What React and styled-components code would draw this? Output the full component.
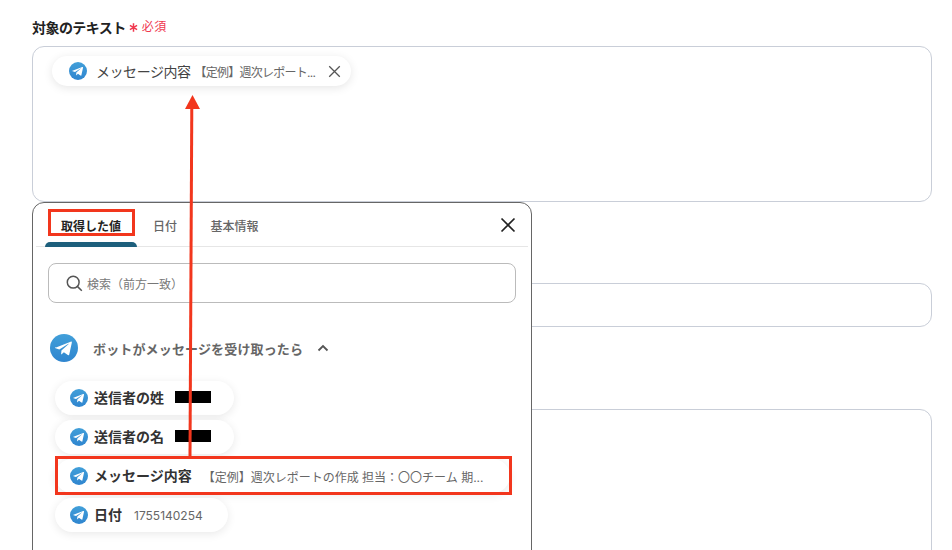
import React from "react";
import styled, { createGlobalStyle } from "styled-components";

const GlobalStyle = createGlobalStyle`
  html, body {
    margin: 0;
    padding: 0;
    background: #fff;
    font-family: Inter, "Noto Sans CJK JP", sans-serif;
  }
`;

const Page = styled.div`
  position: relative;
  width: 952px;
  height: 550px;
  overflow: hidden;
  background: #fff;
`;

const Form = styled.div`
  display: flex;
  flex-direction: column;
  padding: 17px 20px 0 32px;
`;

const LabelRow = styled.div`
  display: flex;
  align-items: center;
  height: 20px;
  margin-bottom: 9px;
`;

const LabelText = styled.span`
  font-size: 14px;
  font-weight: 700;
  letter-spacing: -0.55px;
  color: #222;
`;

const Star = styled.span`
  display: flex;
  margin: 1px 4px 0 3px;
  color: #f0384f;
`;

const Required = styled.span`
  margin-top: -3px;
  font-size: 12px;
  letter-spacing: 0.4px;
  color: #f0384f;
`;

const FieldBox = styled.div`
  box-sizing: border-box;
  height: ${p => p.$height}px;
  margin-bottom: ${p => p.$gap}px;
  padding: 9px 19px;
  border: 1px solid #c9ced8;
  border-radius: 12px;
  background: #fff;
`;

const Chip = styled.div`
  display: inline-flex;
  align-items: center;
  box-sizing: border-box;
  width: 299px;
  height: 30px;
  padding: 0 10px 0 17px;
  border-radius: 15px;
  background: #fff;
  box-shadow: 0 2px 10px rgba(0, 0, 0, 0.1);
`;

const ChipName = styled.span`
  margin-left: 9px;
  font-size: 14px;
  letter-spacing: -0.45px;
  color: #444;
  white-space: nowrap;
`;

const ChipValue = styled.span`
  flex: 1;
  margin-left: 4px;
  font-size: 12px;
  letter-spacing: -0.75px;
  color: #666;
  white-space: nowrap;
`;

const Popup = styled.div`
  position: absolute;
  left: 32px;
  top: 202px;
  box-sizing: border-box;
  width: 500px;
  height: 380px;
  border: 1px solid #666;
  border-radius: 12px;
  background: #fff;
`;

const TabBar = styled.div`
  position: relative;
  display: flex;
  align-items: stretch;
  height: 43px;
  margin: 0 3px;
  padding-left: 9px;
  border-bottom: 1px solid #e6e6e6;
`;

const Tab = styled.div`
  position: relative;
  display: flex;
  align-items: center;
  justify-content: center;
  box-sizing: border-box;
  width: ${p => p.$width}px;
  padding-top: 1px;
  font-size: 12px;
  font-weight: ${p => (p.$active ? 700 : 500)};
  color: ${p => (p.$active ? "#222" : "#666")};

  &::after {
    content: "";
    display: ${p => (p.$active ? "block" : "none")};
    position: absolute;
    left: 0;
    right: 0;
    bottom: -1px;
    height: 5px;
    border-radius: 5px 5px 0 0;
    background: #1d5f7c;
  }
`;

const CloseButton = styled.div`
  position: absolute;
  right: 12px;
  top: 14px;
  display: flex;
  color: #222;
`;

const Body = styled.div`
  display: flex;
  flex-direction: column;
  padding: 16px 15px 0;
`;

const SearchBox = styled.div`
  display: flex;
  align-items: center;
  gap: 4px;
  box-sizing: border-box;
  height: 40px;
  padding-left: 17px;
  border: 1px solid #bbb;
  border-radius: 8px;
  font-size: 12px;
  color: #777;
`;

const GroupRow = styled.div`
  display: flex;
  align-items: center;
  height: 28px;
  margin: 31px 0 19px 2px;
`;

const GroupTitle = styled.span`
  margin-left: 15px;
  font-size: 13px;
  font-weight: 700;
  letter-spacing: 0.15px;
  color: #666;
`;

const Chevron = styled.span`
  display: flex;
  margin-left: 14px;
  color: #555;
`;

const PillList = styled.div`
  display: flex;
  flex-direction: column;
  align-items: flex-start;
  gap: 5px;
  margin-left: 7px;
`;

const Pill = styled.div`
  display: flex;
  align-items: center;
  box-sizing: border-box;
  width: ${p => p.$width}px;
  height: 34px;
  padding-left: 15px;
  border-radius: 17px;
  background: #fff;
  box-shadow: 0 2px 10px rgba(0, 0, 0, 0.09);
`;

const PillName = styled.span`
  margin-left: 6px;
  margin-top: -2px;
  font-size: 14px;
  font-weight: 700;
  color: #333;
  white-space: nowrap;
`;

const PillValue = styled.span`
  margin-left: ${p => p.$gap}px;
  font-size: 12px;
  color: #666;
  white-space: nowrap;
`;

const Redacted = styled.span`
  width: 36px;
  height: 12px;
  margin-left: 11px;
  margin-top: -3px;
  background: #000;
`;

const RedFrame = styled.div`
  position: absolute;
  left: ${p => p.$left}px;
  top: ${p => p.$top}px;
  box-sizing: border-box;
  width: ${p => p.$width}px;
  height: ${p => p.$height}px;
  border: 3px solid #f2361d;
`;

const ArrowLayer = styled.svg`
  position: absolute;
  left: 0;
  top: 0;
`;

const ChipClose = styled.span`
  display: flex;
  color: #555;
`;

const TelegramIcon = ({ size }) => {
  const id = `tg-${size}`;
  return (
    <svg width={size} height={size} viewBox="0 0 24 24" style={{ flexShrink: 0 }}>
      <defs>
        <linearGradient id={id} x1="0.5" y1="0" x2="0.5" y2="1">
          <stop offset="0" stopColor="#419fd9" />
          <stop offset="1" stopColor="#2f85cf" />
        </linearGradient>
      </defs>
      <circle cx="12" cy="12" r="12" fill={`url(#${id})`} />
      <path
        d="M4.6 11.8 17.7 6.6c.7-.3 1.2.2 1 1l-2.2 10c-.1.7-.6.9-1.2.5l-3.4-2.5-1.7 1.6c-.2.2-.4.3-.7.3l.3-3.4 6-5.4c.3-.2 0-.4-.4-.2l-7.4 4.7-3.2-1c-.7-.2-.7-.7.0-1z"
        fill="#fff"
      />
    </svg>
  );
};

const CrossIcon = ({ size, width }) => (
  <svg width={size} height={size} viewBox="0 0 16 16" fill="none" stroke="currentColor" strokeWidth={width}>
    <path d="M1.5 1.5 14.5 14.5M14.5 1.5 1.5 14.5" />
  </svg>
);

const SearchIcon = () => (
  <svg width="17" height="17" viewBox="0 0 17 17" fill="none" stroke="#555" strokeWidth="1.5">
    <circle cx="7.2" cy="7.2" r="5.9" />
    <path d="M11.6 11.6 15.8 15.8" />
  </svg>
);

const ChevronIcon = () => (
  <svg width="12" height="8" viewBox="0 0 12 8" fill="none" stroke="currentColor" strokeWidth="1.8">
    <path d="M1.5 6.5 6 2l4.5 4.5" />
  </svg>
);

const StarIcon = () => (
  <svg width="9" height="9" viewBox="0 0 9 9" fill="none" stroke="currentColor" strokeWidth="1.5">
    <path d="M4.5 0.3V8.7M0.9 2.4 8.1 6.6M8.1 2.4 0.9 6.6" />
  </svg>
);

const App = () => (
  <Page>
    <GlobalStyle />
    <Form>
      <LabelRow>
        <LabelText>対象のテキスト</LabelText>
        <Star>
          <StarIcon />
        </Star>
        <Required>必須</Required>
      </LabelRow>
      <FieldBox $height={156} $gap={81}>
        <Chip>
          <TelegramIcon size={18} />
          <ChipName>メッセージ内容</ChipName>
          <ChipValue>【定例】週次レポート...</ChipValue>
          <ChipClose>
            <CrossIcon size={13} width={1.6} />
          </ChipClose>
        </Chip>
      </FieldBox>
      <FieldBox $height={44} $gap={82} />
      <FieldBox $height={200} $gap={0} />
    </Form>

    <Popup>
      <TabBar>
        <Tab $width={92} $active>取得した値</Tab>
        <Tab $width={56}>日付</Tab>
        <Tab $width={83}>基本情報</Tab>
        <CloseButton>
          <CrossIcon size={16} width={1.7} />
        </CloseButton>
      </TabBar>
      <Body>
        <SearchBox>
          <SearchIcon />
          検索（前方一致）
        </SearchBox>
        <GroupRow>
          <TelegramIcon size={28} />
          <GroupTitle>ボットがメッセージを受け取ったら</GroupTitle>
          <Chevron>
            <ChevronIcon />
          </Chevron>
        </GroupRow>
        <PillList>
          <Pill $width={179}>
            <TelegramIcon size={18} />
            <PillName>送信者の姓</PillName>
            <Redacted />
          </Pill>
          <Pill $width={179}>
            <TelegramIcon size={18} />
            <PillName>送信者の名</PillName>
            <Redacted />
          </Pill>
          <Pill $width={455}>
            <TelegramIcon size={18} />
            <PillName>メッセージ内容</PillName>
            <PillValue $gap={11}>【定例】週次レポートの作成 担当：〇〇チーム 期...</PillValue>
          </Pill>
          <Pill $width={173}>
            <TelegramIcon size={18} />
            <PillName>日付</PillName>
            <PillValue $gap={12}>1755140254</PillValue>
          </Pill>
        </PillList>
      </Body>
    </Popup>

    <RedFrame $left={48} $top={209} $width={87} $height={27} />
    <RedFrame $left={55} $top={456} $width={457} $height={39} />

    <ArrowLayer width="952" height="550" viewBox="0 0 952 550">
      <path d="M190 456 191.8 106" stroke="#f2361d" strokeWidth="3" fill="none" />
      <path d="M192.5 95 200 109 185 109Z" fill="#f2361d" />
    </ArrowLayer>
  </Page>
);

export default App;
